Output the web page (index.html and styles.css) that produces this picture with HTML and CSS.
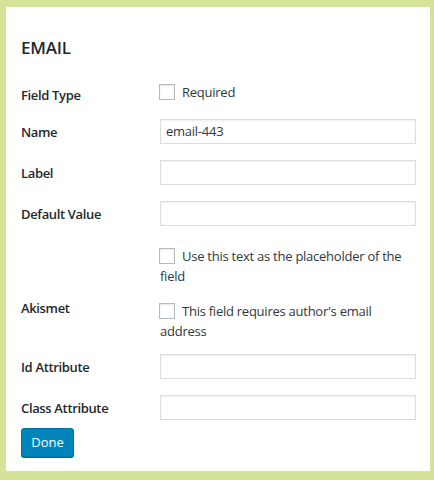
FILE: index.html
```html
<!DOCTYPE html>
<html>
<head>
<meta charset="utf-8">
<link rel="stylesheet" href="styles.css">
</head>
<body>
<div class="panel">
  <h3 class="title">EMAIL</h3>
  <div class="form">
    <div class="row row-first">
      <div class="label">Field Type</div>
      <div class="field"><span class="check"></span>Required</div>
    </div>
    <div class="row row-input">
      <div class="label">Name</div>
      <div class="field"><div class="input">email-443</div></div>
    </div>
    <div class="row row-input">
      <div class="label">Label</div>
      <div class="field"><div class="input"></div></div>
    </div>
    <div class="row row-input">
      <div class="label">Default Value</div>
      <div class="field"><div class="input"></div></div>
    </div>
    <div class="row row-placeholder">
      <div class="label"></div>
      <div class="field"><span class="check"></span>Use this text as the placeholder of the field</div>
    </div>
    <div class="row row-akismet">
      <div class="label">Akismet</div>
      <div class="field"><span class="check"></span>This field requires author's email address</div>
    </div>
    <div class="row row-id">
      <div class="label">Id Attribute</div>
      <div class="field"><div class="input"></div></div>
    </div>
    <div class="row row-input">
      <div class="label">Class Attribute</div>
      <div class="field"><div class="input"></div></div>
    </div>
  </div>
  <button class="done">Done</button>
</div>
</body>
</html>
```
FILE: styles.css
```css
html, body {
  margin: 0;
  padding: 0;
}
body {
  background: #d4e398;
  font-family: "Open Sans", "Noto Sans", sans-serif;
  font-size: 13px;
  line-height: 20px;
  color: #32373c;
  width: 434px;
  height: 480px;
  overflow: hidden;
}
.panel {
  box-sizing: border-box;
  margin: 7px 4px 0 6px;
  width: 424px;
  height: 464px;
  background: #fff;
  padding: 31px 0 0 15px;
}
.title {
  margin: 0;
  font-size: 17px;
  line-height: 20px;
  font-weight: 600;
  color: #23282d;
  letter-spacing: -0.2px;
}
.form {
  margin-top: 24px;
}
.row {
  display: flex;
}
.label {
  width: 139px;
  flex: none;
  padding-top: 3px;
  font-weight: 600;
  color: #23282d;
  letter-spacing: -0.35px;
}
.field {
  width: 256px;
  letter-spacing: -0.25px;
}
.row-input {
  margin-top: 16px;
}
.row-first + .row-input {
  margin-top: 14px;
}
.row-placeholder {
  margin-top: 20px;
}
.row-akismet {
  margin-top: 12px;
}
.row-akismet .label {
  padding-top: 0;
}
.row-akismet .field {
  padding-top: 3px;
}
.row-id {
  margin-top: 13px;
}
.input {
  box-sizing: border-box;
  height: 25px;
  border: 1px solid #ddd;
  box-shadow: inset 0 1px 2px rgba(0, 0, 0, 0.07);
  padding: 1px 5px;
  line-height: 21px;
  color: #32373c;
}
.check {
  display: inline-block;
  box-sizing: border-box;
  width: 16px;
  height: 16px;
  border: 1px solid #b4b9be;
  background: #fff;
  box-shadow: inset 0 1px 2px rgba(0, 0, 0, 0.1);
  vertical-align: top;
  margin: 2px 7px 0 -1px;
}
.done {
  display: block;
  margin-top: 8px;
  box-sizing: border-box;
  width: 53px;
  height: 29px;
  padding: 0 0 1px;
  background: #0085ba;
  border: 1px solid #0073aa;
  border-radius: 3px;
  box-shadow: 0 1px 0 #006799;
  color: #fff;
  font-family: "Open Sans", "Noto Sans", sans-serif;
  font-size: 13px;
  line-height: 26px;
}
```
